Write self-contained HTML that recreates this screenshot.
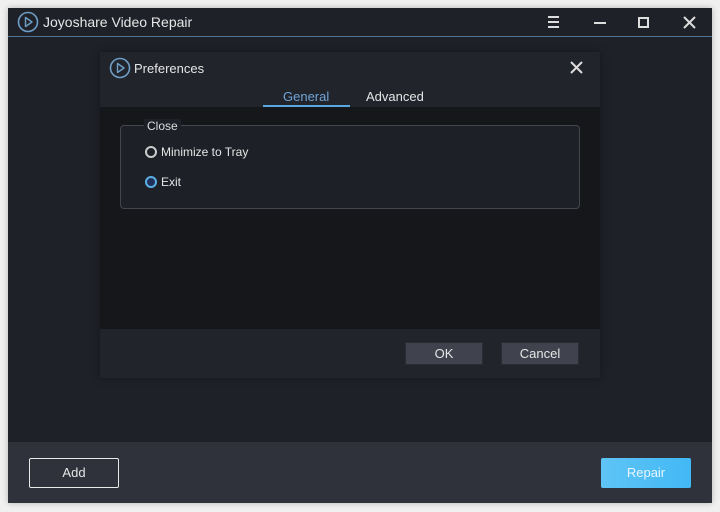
<!DOCTYPE html>
<html><head><style>
*{margin:0;padding:0;box-sizing:border-box}
body{width:720px;height:512px;background:#f0f0f0;position:relative;overflow:hidden;font-family:"Liberation Sans",sans-serif;color:#e6e6e6}
.abs{position:absolute}
</style></head><body>
<div class="abs" style="left:8px;top:8px;width:704px;height:495px;background:#1f2129;box-shadow:0 0 6px rgba(0,0,0,.25)"></div>
<div class="abs" style="left:8px;top:8px;width:704px;height:29px;background:#1f2129;border-bottom:1px solid #4e7597"></div>
<svg class="abs" style="left:17px;top:11px" width="22" height="22" viewBox="0 0 22 22"><circle cx="11" cy="11" r="9.5" fill="none" stroke="#6f9fc6" stroke-width="1.6"/><path d="M8.5 6.5 L15 11 L8.5 15.5 Z" fill="none" stroke="#6f9fc6" stroke-width="1.4" stroke-linejoin="round"/></svg>
<div class="abs" style="left:43px;top:14px;font-size:14px">Joyoshare Video Repair</div>
<svg class="abs" style="left:540px;top:14px" width="170" height="18"><g stroke="#ddd" stroke-width="2" fill="none"><path d="M8 3h11M8 8h11M8 13h11"/><path d="M54 9h12"/><rect x="99" y="4" width="9" height="9"/><path d="M144 3l11 11M155 3l-11 11"/></g></svg>
<!-- dialog -->
<div class="abs" style="left:100px;top:52px;width:500px;height:326px;background:#22242c;box-shadow:0 0 8px rgba(0,0,0,.35)"></div>
<svg class="abs" style="left:109px;top:57px" width="22" height="22" viewBox="0 0 22 22"><circle cx="11" cy="11" r="9.5" fill="none" stroke="#6f9fc6" stroke-width="1.6"/><path d="M8.5 6.5 L15 11 L8.5 15.5 Z" fill="none" stroke="#6f9fc6" stroke-width="1.4" stroke-linejoin="round"/></svg>
<div class="abs" style="left:134px;top:61px;font-size:13px">Preferences</div>
<svg class="abs" style="left:569px;top:60px" width="16" height="16"><path d="M2 2l11 11M13 2L2 13" stroke="#ddd" stroke-width="2"/></svg>
<div class="abs" style="left:283px;top:89px;font-size:13px;color:#6fa4d6">General</div>
<div class="abs" style="left:366px;top:89px;font-size:13px">Advanced</div>
<div class="abs" style="left:263px;top:105px;width:87px;height:2px;background:#5aa8e0"></div>
<div class="abs" style="left:100px;top:107px;width:500px;height:222px;background:#16171b"></div>
<div class="abs" style="left:120px;top:125px;width:460px;height:84px;border:1px solid #44464e;border-radius:4px;background:#1e2028"></div>
<div class="abs" style="left:144px;top:119px;font-size:12px;background:#1e2028;padding:0 3px;color:#ddd">Close</div>
<div class="abs" style="left:145px;top:146px;width:12px;height:12px;border:2px solid #ccc;border-radius:50%"></div>
<div class="abs" style="left:161px;top:145px;font-size:12px">Minimize to Tray</div>
<div class="abs" style="left:145px;top:176px;width:12px;height:12px;border:2px solid #5ab0e4;border-radius:50%;background:#20305a"></div>
<div class="abs" style="left:161px;top:175px;font-size:12px">Exit</div>
<div class="abs" style="left:405px;top:342px;width:78px;height:23px;background:#40424e;border:1px solid #2a2c33;font-size:13px;text-align:center;line-height:22px">OK</div>
<div class="abs" style="left:501px;top:342px;width:78px;height:23px;background:#40424e;border:1px solid #2a2c33;font-size:13px;text-align:center;line-height:22px">Cancel</div>
<!-- bottom -->
<div class="abs" style="left:8px;top:442px;width:704px;height:61px;background:#30323b"></div>
<div class="abs" style="left:29px;top:458px;width:90px;height:30px;border:1px solid #e8e8e8;border-radius:2px;font-size:13px;text-align:center;line-height:28px">Add</div>
<div class="abs" style="left:601px;top:458px;width:90px;height:30px;background:linear-gradient(90deg,#5fc4f5,#42b8f5);border-radius:2px;font-size:13px;text-align:center;line-height:30px;color:#e8f6ff">Repair</div>
</body></html>
